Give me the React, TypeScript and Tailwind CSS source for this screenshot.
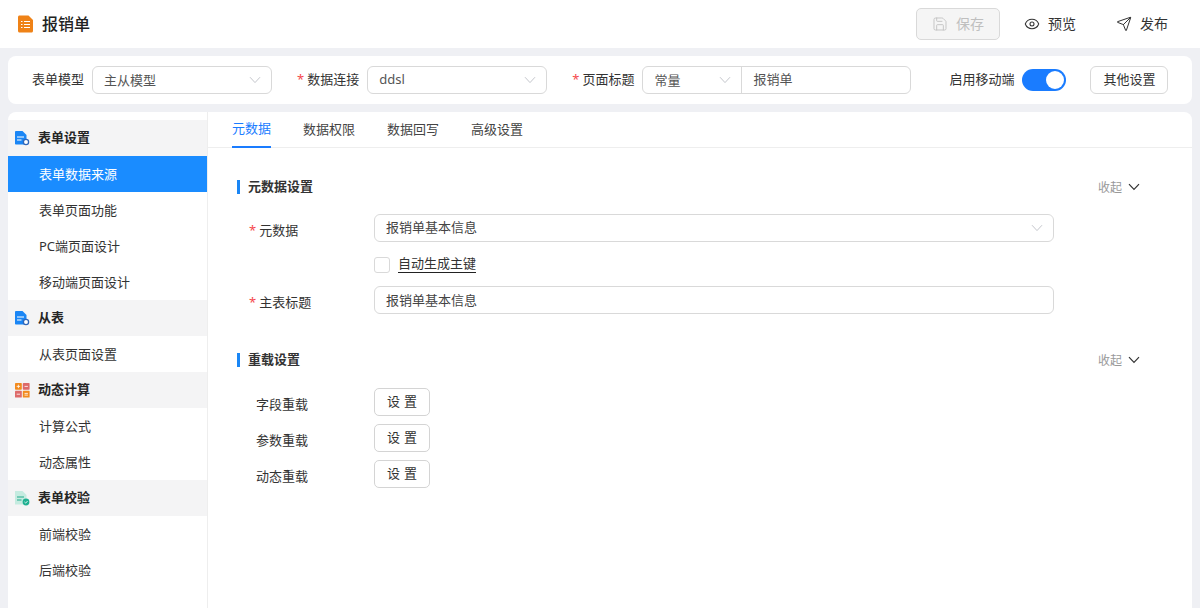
import React from "react";
import { Eye, Save, Send } from "lucide-react";

const FONT = 'font-["Noto_Sans","Noto_Sans_CJK_SC",sans-serif]';

function Star() {
  return <span className="mr-[3px] text-[13px] text-[#f5484d]">*</span>;
}

function SmallChevron({ className = "" }: { className?: string }) {
  return (
    <svg width="12" height="8" viewBox="0 0 12 8" fill="none" className={className}>
      <path d="M1 1.2 L6 6.6 L11 1.2" stroke="#c4c6cc" strokeWidth="1" />
    </svg>
  );
}

function DocIcon() {
  return (
    <svg width="15" height="15" viewBox="0 0 15 15" className="shrink-0">
      <path d="M1 0H7.5L11.5 4V13.5H1C0.5 13.5 0 13.1 0 12.5V1C0 0.5 0.5 0 1 0Z" fill="#1a86f5" />
      <rect x="2" y="5.5" width="7" height="1" fill="#fff" />
      <rect x="2" y="8.5" width="4.5" height="1" fill="#fff" />
      <circle cx="11" cy="11" r="2.6" fill="#fff" stroke="#3066b8" strokeWidth="1.3" />
    </svg>
  );
}

function CalcIcon() {
  return (
    <svg width="15" height="15" viewBox="0 0 15 15" className="shrink-0">
      <rect x="0" y="0" width="6.8" height="6.8" rx="0.7" fill="#f28a1e" />
      <rect x="7.8" y="0" width="6.8" height="6.8" rx="0.7" fill="#dd6a6a" />
      <rect x="0" y="7.8" width="6.8" height="6.8" rx="0.7" fill="#dd6a6a" />
      <rect x="7.8" y="7.8" width="6.8" height="6.8" rx="0.7" fill="#f28a1e" />
      <path d="M1.7 3.4H5.1M3.4 1.7V5.1M9.5 3.4H12.9M1.7 11.2H5.1M9.5 10.4H12.9M9.5 12.1H12.9" stroke="#fff" strokeWidth="0.8" />
    </svg>
  );
}

function CheckDocIcon() {
  return (
    <svg width="15" height="15" viewBox="0 0 15 15" className="shrink-0">
      <path d="M0 0H7.5L11.5 4V13.5H0Z" fill="#c5ebe0" />
      <rect x="2" y="5.5" width="7" height="1" fill="#22ab8c" />
      <rect x="2" y="8.5" width="4.5" height="1" fill="#22ab8c" />
      <circle cx="11" cy="11" r="3.4" fill="#1fb091" />
      <path d="M9.4 10.9L10.7 12.1L12.6 10" stroke="#fff" strokeWidth="0.8" fill="none" />
    </svg>
  );
}

function FileTitleIcon() {
  return (
    <svg width="16" height="18" viewBox="0 0 16 18" className="shrink-0">
      <path d="M1.5 0.5H10.5L15 5V16C15 16.8 14.4 17.5 13.5 17.5H1.5C0.7 17.5 0 16.8 0 16V2C0 1.2 0.7 0.5 1.5 0.5Z" fill="#ef8217" />
      <path d="M3 6.5H4.5M6 6.5H12M3 9.5H4.5M6 9.5H12M3 12.5H4.5M6 12.5H12" stroke="#fff" strokeWidth="1" />
    </svg>
  );
}

function Group({ icon, title }: { icon: React.ReactNode; title: string }) {
  return (
    <div className="flex h-9 items-center gap-2 bg-[#f4f4f5] pl-[7px] text-[13px] font-bold text-[#262626]">
      {icon}
      <span>{title}</span>
    </div>
  );
}

function Item({ label, active }: { label: string; active?: boolean }) {
  return (
    <div className={`flex h-9 items-center pl-[31px] pt-px text-[13px] ${active ? "bg-[#1a8cff] text-white" : "text-[#333]"}`}>
      {label}
    </div>
  );
}

function SectionHead({ title }: { title: string }) {
  return (
    <div className="flex h-5 items-center pr-[52px]">
      <span className="h-[14px] w-[3px] bg-[#1a86f5]" />
      <span className="ml-2 text-[13px] font-bold text-[#333]">{title}</span>
      <span className="ml-auto pt-0.5 text-xs text-[#999]">收起</span>
      <svg width="12" height="8" viewBox="0 0 12 8" fill="none" className="ml-1.5">
        <path d="M1 1.2 L6 6.4 L11 1.2" stroke="#333" strokeWidth="1.2" />
      </svg>
    </div>
  );
}

function SetRow({ label }: { label: string }) {
  return (
    <div className="flex h-9 items-center">
      <span className="mt-[5px] w-[137px] pl-[19px] text-[13px] text-[#333]">{label}</span>
      <button className="flex h-7 w-14 items-center justify-center rounded-[5px] border border-[#d4d4d4] pl-1 text-[13px] tracking-[4px] text-[#333]">
        设置
      </button>
    </div>
  );
}

const TOP_BORDER = "border border-[#d9d9d9] rounded-[6px]";

export default function App() {
  return (
    <div className={`${FONT} flex h-[608px] w-[1200px] flex-col overflow-hidden bg-[#eff0f4]`}>
      <header className="flex h-12 shrink-0 items-center bg-white pl-[18px] pr-[32px]">
        <FileTitleIcon />
        <span className="ml-2 text-base font-medium text-[#222]">报销单</span>
        <div className="ml-auto flex items-center text-sm text-[#333]">
          <button className="flex h-8 w-[84px] items-center justify-center gap-[8px] rounded-[5px] border border-[#d9d9d9] bg-[#f5f5f5] text-[#bfbfbf]">
            <Save size={16} strokeWidth={1.3} />
            保存
          </button>
          <span className="ml-6 flex items-center gap-2">
            <Eye size={16} strokeWidth={1.6} />
            预览
          </span>
          <span className="ml-10 flex items-center gap-2">
            <Send size={16} strokeWidth={1.5} />
            发布
          </span>
        </div>
      </header>

      <div className="mx-2 mt-2 flex h-12 shrink-0 items-center whitespace-nowrap rounded-lg bg-white pl-6 pr-6 text-[13px] text-[#333]">
        <span className="shrink-0">表单模型</span>
        <div className={`ml-2 flex h-7 w-[180px] shrink-0 items-center justify-between pl-[11px] pr-[10px] ${TOP_BORDER}`}>
          <span className="pt-0.5 text-[#555]">主从模型</span>
          <SmallChevron />
        </div>
        <span className="ml-[25px] shrink-0"><Star />数据连接</span>
        <div className={`ml-2 flex h-7 w-[180px] shrink-0 items-center justify-between pl-[11px] pr-[10px] ${TOP_BORDER}`}>
          <span className="text-[#555]">ddsl</span>
          <SmallChevron />
        </div>
        <span className="ml-[25px] shrink-0"><Star />页面标题</span>
        <div className={`ml-2 flex h-7 w-[269px] shrink-0 items-center ${TOP_BORDER}`}>
          <div className="flex h-full w-[99px] items-center justify-between border-r border-[#d9d9d9] pl-[11px] pr-[10px]">
            <span className="pt-0.5 text-[#555]">常量</span>
            <SmallChevron />
          </div>
          <span className="pl-[11px] text-[#555]">报销单</span>
        </div>
        <span className="ml-[38px] shrink-0">启用移动端</span>
        <div className="ml-2 flex h-[22px] w-11 shrink-0 items-center justify-end rounded-full bg-[#1a7cff] pr-0.5">
          <span className="h-[18px] w-[18px] rounded-full bg-white" />
        </div>
        <button className={`ml-6 h-7 w-[78px] shrink-0 text-[13px] text-[#333] ${TOP_BORDER}`}>其他设置</button>
      </div>

      <div className="mx-2 mt-2 flex min-h-0 flex-1 overflow-hidden rounded-t-lg bg-white">
        <aside className="w-[200px] shrink-0 border-r border-[#eeeeee] pt-2">
          <Group icon={<DocIcon />} title="表单设置" />
          <Item label="表单数据来源" active />
          <Item label="表单页面功能" />
          <Item label="PC端页面设计" />
          <Item label="移动端页面设计" />
          <Group icon={<DocIcon />} title="从表" />
          <Item label="从表页面设置" />
          <Group icon={<CalcIcon />} title="动态计算" />
          <Item label="计算公式" />
          <Item label="动态属性" />
          <Group icon={<CheckDocIcon />} title="表单校验" />
          <Item label="前端校验" />
          <Item label="后端校验" />
        </aside>

        <main className="min-w-0 flex-1">
          <div className="flex h-9 items-stretch gap-8 border-b border-[#eeeeee] pl-6 text-[13px] text-[#444]">
            <span className="-mb-px flex items-center border-b-2 border-[#1a7cff] text-[#1a7cff]">元数据</span>
            <span className="flex items-center">数据权限</span>
            <span className="flex items-center">数据回写</span>
            <span className="flex items-center">高级设置</span>
          </div>

          <div className="pl-[29px] pt-[29px]">
            <SectionHead title="元数据设置" />

            <div className="mt-[17px] flex items-center">
              <span className="mt-1.5 w-[137px] pl-[12px] text-[13px] text-[#333]"><Star />元数据</span>
              <div className={`flex h-7 w-[680px] items-center justify-between pl-[11px] pr-[10px] text-[13px] text-[#444] ${TOP_BORDER}`}>
                报销单基本信息
                <SmallChevron />
              </div>
            </div>

            <div className="mt-[9px] flex h-[28px] items-center pl-[137px]">
              <span className="h-4 w-4 rounded-[3px] border border-[#d9d9d9]" />
              <span className="ml-2 -mt-0.5 border-b border-[#222] text-[13px] leading-[17px] text-[#333]">自动生成主键</span>
            </div>

            <div className="mt-[7px] flex items-center">
              <span className="mt-1.5 w-[137px] pl-[12px] text-[13px] text-[#333]"><Star />主表标题</span>
              <div className={`flex h-7 w-[680px] items-center pl-[11px] pt-0.5 text-[13px] text-[#444] ${TOP_BORDER}`}>
                报销单基本信息
              </div>
            </div>

            <div className="mt-9">
              <SectionHead title="重载设置" />
            </div>

            <div className="mt-[14px]">
              <SetRow label="字段重载" />
              <SetRow label="参数重载" />
              <SetRow label="动态重载" />
            </div>
          </div>
        </main>
      </div>
    </div>
  );
}
